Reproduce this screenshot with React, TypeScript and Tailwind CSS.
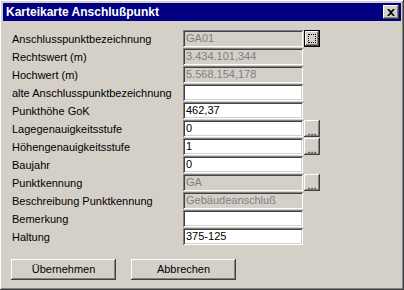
const raised =
  "shadow-[inset_-1px_-1px_#404040,inset_1px_1px_#ffffff,inset_-2px_-2px_#808080,inset_2px_2px_#d4d0c8]";
const sunken =
  "shadow-[inset_1px_1px_#808080,inset_-1px_-1px_#ffffff,inset_2px_2px_#404040,inset_-2px_-2px_#d4d0c8]";

type Row = {
  label: string;
  value: string;
  disabled?: boolean;
  button?: "dots" | "focus";
};

const rows: Row[] = [
  { label: "Anschlusspunktbezeichnung", value: "GA01", disabled: true, button: "focus" },
  { label: "Rechtswert (m)", value: "3.434.101,344", disabled: true },
  { label: "Hochwert (m)", value: "5.568.154,178", disabled: true },
  { label: "alte Anschlusspunktbezeichnung", value: "" },
  { label: "Punkthöhe GoK", value: "462,37" },
  { label: "Lagegenauigkeitsstufe", value: "0", button: "dots" },
  { label: "Höhengenauigkeitsstufe", value: "1", button: "dots" },
  { label: "Baujahr", value: "0" },
  { label: "Punktkennung", value: "GA", disabled: true, button: "dots" },
  { label: "Beschreibung Punktkennung", value: "Gebäudeanschluß", disabled: true },
  { label: "Bemerkung", value: "" },
  { label: "Haltung", value: "375-125" },
];

const FieldRow = ({ row }: { row: Row }) => {
  return (
    <div className="flex h-[18px]">
      <div className="w-[171px] pt-[3px] leading-[13px] text-black">{row.label}</div>
      <div
        className={`w-[120px] h-[17px] pl-[3px] pt-[2px] leading-[13px] ${sunken} ${
          row.disabled ? "bg-[#d4d0c8] text-[#808080]" : "bg-white text-black"
        }`}
      >
        {row.value}
      </div>
      {row.button === "dots" && (
        <div
          className={`ml-[1px] w-[16px] h-[17px] bg-[#d4d0c8] flex justify-center items-end pb-[2px] leading-[8px] text-black ${raised}`}
        >
          ...
        </div>
      )}
      {row.button === "focus" && (
        <div className="ml-[1px] w-[16px] h-[17px] border border-black bg-[#d4d0c8]">
          <div className={`w-full h-full p-[3px] ${raised}`}>
            <div className="w-full h-full border border-dotted border-black"></div>
          </div>
        </div>
      )}
    </div>
  );
};

const App = () => {
  return (
    <div className="w-[404px] h-[290px] bg-[#d4d0c8] font-['Liberation_Sans',Arial,sans-serif] text-[11px]">
      <div className={`w-full h-full p-[3px] flex flex-col ${raised}`}>
        <div className="h-[18px] bg-[#000080] flex items-center justify-between pl-[3px] pr-[2px]">
          <span className="text-white font-bold text-[12px] leading-[14px]">
            Karteikarte Anschlußpunkt
          </span>
          <div
            className={`w-[16px] h-[14px] bg-[#d4d0c8] flex items-center justify-center ${raised}`}
          >
            <svg width="8" height="7" viewBox="0 0 8 7">
              <path d="M0 0h2l2 2 2-2h2L5 3.5 8 7H6L4 5 2 7H0l3-3.5z" fill="#000" />
            </svg>
          </div>
        </div>
        <div className="pl-[9px] pt-[9px] flex flex-col">
          {rows.map((row) => (
            <FieldRow key={row.label} row={row} />
          ))}
        </div>
        <div className="flex gap-[15px] pl-[8px] pt-[13px]">
          <div
            className={`w-[105px] h-[21px] flex items-center justify-center text-black ${raised}`}
          >
            Übernehmen
          </div>
          <div
            className={`w-[105px] h-[21px] flex items-center justify-center text-black ${raised}`}
          >
            Abbrechen
          </div>
        </div>
      </div>
    </div>
  );
};

export default App;
